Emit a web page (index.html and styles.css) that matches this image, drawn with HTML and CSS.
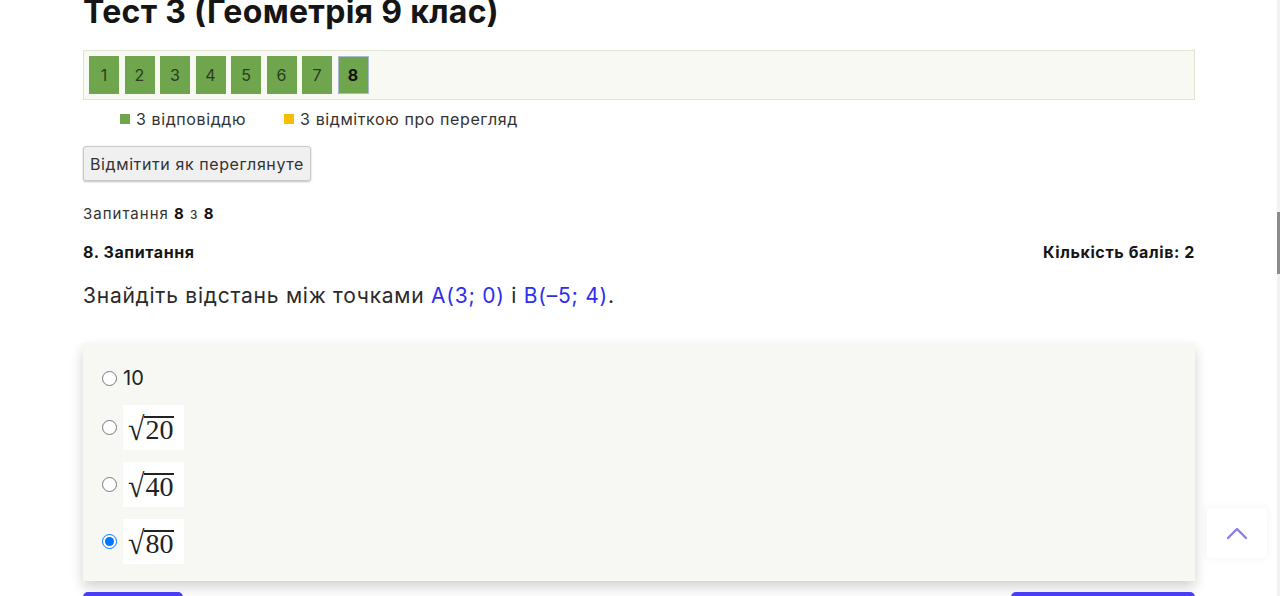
FILE: index.html
```html
<!DOCTYPE html>
<html lang="uk">
<head>
<meta charset="utf-8">
<title>Тест 3 (Геометрія 9 клас)</title>
<link rel="stylesheet" href="styles.css">
</head>
<body>
<div class="page">
  <h1 class="title">Тест 3 (Геометрія 9 клас)</h1>
  <div class="qnav">
    <button class="qbtn">1</button>
    <button class="qbtn">2</button>
    <button class="qbtn">3</button>
    <button class="qbtn">4</button>
    <button class="qbtn">5</button>
    <button class="qbtn">6</button>
    <button class="qbtn">7</button>
    <button class="qbtn current">8</button>
  </div>
  <div class="legend">
    <span class="legend-item"><span class="sq green"></span>З відповіддю</span>
    <span class="legend-item"><span class="sq yellow"></span>З відміткою про перегляд</span>
  </div>
  <button class="mark-btn">Відмітити як переглянуте</button>
  <div class="counter">Запитання <b>8</b> з <b>8</b></div>
  <div class="qhead">
    <span>8. Запитання</span>
    <span>Кількість балів: 2</span>
  </div>
  <p class="qtext">Знайдіть відстань між точками <span class="pt">A(3; 0)</span> і <span class="pt">B(–5; 4)</span>.</p>
  <div class="answers">
    <label class="opt"><input type="radio" name="a"><span class="plain">10</span></label>
    <label class="opt"><input type="radio" name="a"><span class="formula"><span class="rad">√</span><span class="under">20</span></span></label>
    <label class="opt"><input type="radio" name="a"><span class="formula"><span class="rad">√</span><span class="under">40</span></span></label>
    <label class="opt"><input type="radio" name="a" checked><span class="formula"><span class="rad">√</span><span class="under">80</span></span></label>
  </div>
  <div class="bottom">
    <button class="nav-btn prev"></button>
    <button class="nav-btn next"></button>
  </div>
</div>
<button class="to-top" aria-label="Вгору">
  <svg width="22" height="14" viewBox="0 0 22 14"><path d="M2 12 L11 3 L20 12" fill="none" stroke="#8a7df2" stroke-width="2.4" stroke-linecap="round" stroke-linejoin="round"/></svg>
</button>
<div class="scrollbar"><div class="thumb"></div></div>
</body>
</html>
```
FILE: styles.css
```css
html, body {
  margin: 0;
  padding: 0;
  background: #fff;
  overflow: hidden;
  height: 596px;
}
body {
  font-family: Inter, "Noto Sans", sans-serif;
  color: #222;
}
.page {
  width: 1112px;
  margin-left: 83px;
}
.title {
  font-size: 32px;
  font-weight: 700;
  line-height: 36px;
  margin: -6px 0 0;
  color: #151515;
  letter-spacing: 0.3px;
}
.qnav {
  margin-top: 20px;
  height: 48px;
  border: 1px solid #dfe5d0;
  background: #f7f9f2;
  display: flex;
  align-items: center;
  gap: 5.5px;
  padding: 0 5px;
}
.qbtn {
  width: 30px;
  height: 38px;
  border: 1px solid #6ea54d;
  background: #6ea54d;
  color: #2c3a22;
  font-family: inherit;
  font-size: 16px;
  padding: 0;
}
.qbtn.current {
  border-color: #a8b9cf;
  font-weight: 700;
  color: #111;
  width: 31px;
}
.legend {
  display: flex;
  align-items: center;
  padding-left: 37px;
  margin-top: 9px;
  height: 20px;
  font-size: 16px;
  letter-spacing: 0.6px;
  color: #333;
}
.legend-item {
  display: flex;
  align-items: center;
  margin-right: 38px;
}
.sq {
  width: 10px;
  height: 10px;
  margin-right: 6px;
}
.sq.green { background: #6ea54d; }
.sq.yellow { background: #fbbc05; }
.mark-btn {
  display: block;
  margin-top: 17px;
  height: 35px;
  width: 228px;
  padding: 0 4px;
  font-family: inherit;
  font-size: 16px;
  letter-spacing: 0.6px;
  color: #333;
  background: #f0f0f0;
  border: 1px solid #c9c9c9;
  border-radius: 3px;
  box-shadow: 0 1px 2px rgba(0,0,0,0.25);
}
.counter {
  margin-top: 23px;
  font-size: 15px;
  letter-spacing: 1px;
  line-height: 20px;
  color: #333;
}
.counter b { color: #111; }
.qhead {
  display: flex;
  justify-content: space-between;
  margin-top: 18px;
  font-size: 16px;
  letter-spacing: 0.6px;
  font-weight: 700;
  line-height: 20px;
  color: #151515;
}
.qtext {
  margin: 20px 0 0;
  font-size: 21px;
  letter-spacing: 0.75px;
  line-height: 28px;
  color: #2a2a2a;
}
.pt { color: #2f2ef0; }
.answers {
  margin-top: 33px;
  background: #f7f8f4;
  box-shadow: 0 6px 12px rgba(0,0,0,0.18);
  padding: 20px 19px 10px;
  display: flex;
  flex-direction: column;
  gap: 12px;
  height: 238px;
  box-sizing: border-box;
}
.opt {
  display: flex;
  align-items: center;
  gap: 6px;
}
.opt input {
  margin: 0;
  width: 15px;
  height: 15px;
}
.plain {
  font-size: 20px;
  line-height: 30px;
  color: #222;
}
.formula {
  background: #fff;
  display: inline-flex;
  align-items: center;
  height: 45px;
  padding: 2px 10px 0 5px;
  font-family: "Liberation Serif", "DejaVu Serif", serif;
  font-size: 28px;
  color: #222;
  box-sizing: border-box;
}
.rad {
  font-size: 30px;
  line-height: 28px;
  transform: scaleY(1.1);
  display: inline-block;
}
.under {
  border-top: 2px solid #222;
  line-height: 24px;
  padding: 0 1px;
}
.bottom {
  display: flex;
  justify-content: space-between;
  margin-top: 11px;
}
.nav-btn {
  height: 36px;
  border: none;
  border-radius: 5px;
  background: #4b3cf5;
}
.nav-btn.prev { width: 100px; }
.nav-btn.next { width: 184px; }
.to-top {
  position: fixed;
  left: 1207px;
  top: 508px;
  width: 60px;
  height: 50px;
  border: none;
  background: #fff;
  border-radius: 4px;
  box-shadow: 0 0 10px rgba(0,0,0,0.06);
  display: flex;
  align-items: center;
  justify-content: center;
  padding: 0;
}
.scrollbar {
  position: fixed;
  right: 0;
  top: 0;
  width: 3px;
  height: 596px;
  background: #f1f1f1;
}
.thumb {
  margin-top: 212px;
  height: 62px;
  background: #8c8c8c;
}
```
